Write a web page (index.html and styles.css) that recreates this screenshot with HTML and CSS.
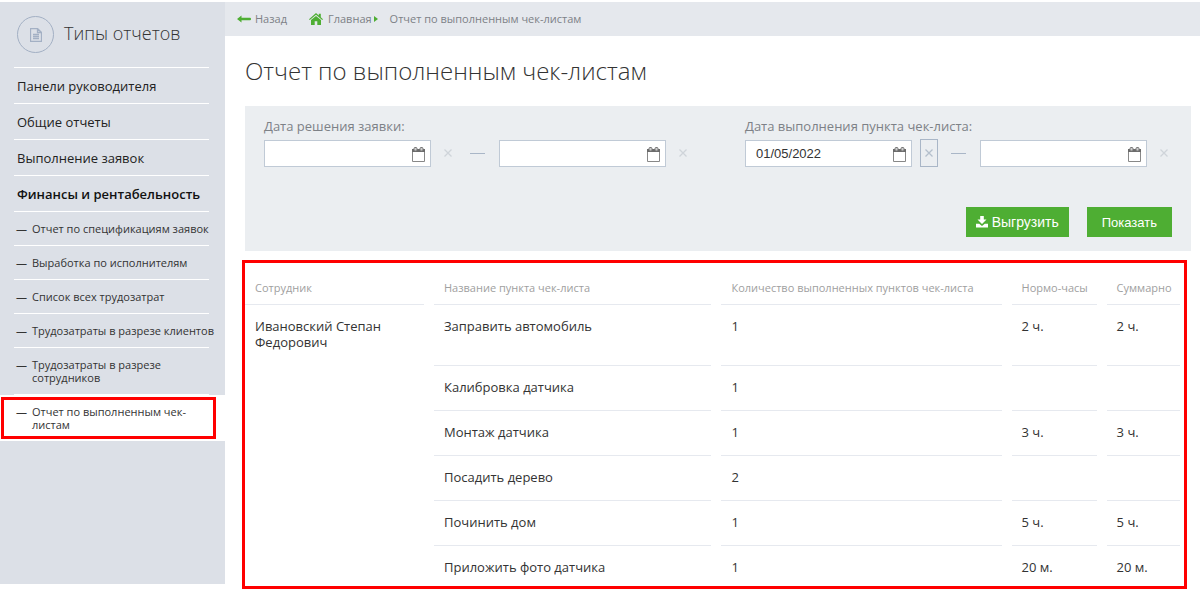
FILE: index.html
```html
<!DOCTYPE html>
<html lang="ru">
<head>
<meta charset="utf-8">
<meta name="viewport" content="width=device-width, initial-scale=1">
<title>Отчет по выполненным чек-листам</title>
<link rel="stylesheet" href="styles.css">
</head>
<body>
<svg class="defs" aria-hidden="true">
  <symbol id="calendar" viewBox="0 0 13 15">
    <path d="M.5 4.500h12v10H.5z" fill="#fff" stroke="#888"/>
    <path d="M0 2h13v3H0z" fill="#6b6b6b"/>
    <rect x="2" y=".5" width="3" height="3.500" rx="1" fill="#ccc" stroke="#777"/>
    <rect x="8" y=".5" width="3" height="3.500" rx="1" fill="#ccc" stroke="#777"/>
  </symbol>
  <symbol id="cross" viewBox="0 0 8 8">
    <path d="M.5.5l7 7M7.500.5l-7 7" fill="none" stroke="currentColor" stroke-width="1.300"/>
  </symbol>
</svg>
<div class="app">
  <aside class="sidebar">
    <div class="sidebar-head">
      <span class="sidebar-badge">
        <svg width="12" height="14" viewBox="0 0 12 14" fill="none" stroke="currentColor" stroke-width="1.300"><path d="M.5.5h7l4 4v9H.5zM7.500.5v4h4M3 6.500h6M3 8.500h6M3 10.500h6"/></svg>
      </span>
      <h2 class="sidebar-title">Типы отчетов</h2>
    </div>
    <nav>
      <ul class="menu">
        <li><a href="#">Панели руководителя</a></li>
        <li><a href="#">Общие отчеты</a></li>
        <li><a href="#">Выполнение заявок</a></li>
        <li class="current"><a href="#">Финансы и рентабельность</a></li>
      </ul>
      <ul class="submenu">
        <li><a href="#">Отчет по спецификациям заявок</a></li>
        <li><a href="#">Выработка по исполнителям</a></li>
        <li><a href="#">Список всех трудозатрат</a></li>
        <li><a href="#">Трудозатраты в разрезе клиентов</a></li>
        <li><a href="#">Трудозатраты в разрезе сотрудников</a></li>
        <li class="active"><a href="#">Отчет по выполненным чек-листам</a></li>
      </ul>
    </nav>
  </aside>
  <main class="main">
    <nav class="crumbs">
      <a class="back" href="#"><svg width="14" height="8" viewBox="0 0 14 8" fill="#4eae33"><path d="M0 4L4.500.5v2.200H13q1 0 1 1.300t-1 1.300H4.500v2.200z"/></svg>Назад</a>
      <a class="home" href="#"><svg width="14" height="12" viewBox="0 0 14 12" fill="#4eae33"><path d="M7 0l2.800 2.500V.8h2v3.500L14 6.200l-.8.900L7 1.800.8 7.100 0 6.200z"/><path d="M7 2.900l5 4.200V12H8.300V8.300H5.700V12H2V7.100z"/></svg>Главная<svg class="caret" width="4" height="6" viewBox="0 0 4 6" fill="#4eae33"><path d="M0 0l4 3-4 3z"/></svg></a>
      <span>Отчет по выполненным чек-листам</span>
    </nav>
    <div class="content">
      <h1 class="title">Отчет по выполненным чек-листам</h1>
      <form class="filter">
        <div class="ranges">
          <fieldset class="range">
            <legend>Дата решения заявки:</legend>
            <div class="range-row">
              <span class="date"><input type="text" aria-label="Дата решения, с"><svg><use href="#calendar"/></svg></span>
              <button class="clear" type="button" aria-label="Очистить"><svg><use href="#cross"/></svg></button>
              <span class="dash"></span>
              <span class="date"><input type="text" aria-label="Дата решения, по"><svg><use href="#calendar"/></svg></span>
              <button class="clear" type="button" aria-label="Очистить"><svg><use href="#cross"/></svg></button>
            </div>
          </fieldset>
          <fieldset class="range">
            <legend>Дата выполнения пункта чек-листа:</legend>
            <div class="range-row">
              <span class="date"><input type="text" value="01/05/2022" aria-label="Дата выполнения, с"><svg><use href="#calendar"/></svg></span>
              <button class="clear focused" type="button" aria-label="Очистить"><svg><use href="#cross"/></svg></button>
              <span class="dash"></span>
              <span class="date"><input type="text" aria-label="Дата выполнения, по"><svg><use href="#calendar"/></svg></span>
              <button class="clear" type="button" aria-label="Очистить"><svg><use href="#cross"/></svg></button>
            </div>
          </fieldset>
        </div>
        <div class="actions">
          <button class="btn export" type="button"><svg width="12" height="12" viewBox="0 0 12 12" fill="#fff"><path d="M4.200 0h3.600v3.500h2.700L6 8 1.500 3.500h2.700z"/><path d="M0 7.800h3.200L6 10l2.800-2.200H12v3.700H0z"/></svg>Выгрузить</button>
          <button class="btn show" type="submit">Показать</button>
        </div>
      </form>
      <div class="result">
        <table class="report">
          <colgroup><col class="c-who"><col class="c-item"><col class="c-count"><col class="c-norm"><col class="c-sum"></colgroup>
          <thead>
            <tr><th>Сотрудник</th><th>Название пункта чек-листа</th><th>Количество выполненных пунктов чек-листа</th><th>Нормо-часы</th><th>Суммарно</th></tr>
          </thead>
          <tbody>
            <tr class="first"><td rowspan="6">Ивановский Степан Федорович</td><td>Заправить автомобиль</td><td>1</td><td>2 ч.</td><td>2 ч.</td></tr>
            <tr><td>Калибровка датчика</td><td>1</td><td></td><td></td></tr>
            <tr><td>Монтаж датчика</td><td>1</td><td>3 ч.</td><td>3 ч.</td></tr>
            <tr><td>Посадить дерево</td><td>2</td><td></td><td></td></tr>
            <tr><td>Починить дом</td><td>1</td><td>5 ч.</td><td>5 ч.</td></tr>
            <tr class="last"><td>Приложить фото датчика</td><td>1</td><td>20 м.</td><td>20 м.</td></tr>
          </tbody>
        </table>
      </div>
    </div>
  </main>
</div>
</body>
</html>
```
FILE: styles.css
```css
* { box-sizing: border-box; }
body {
  margin: 0;
  background: #fff;
  color: #333;
  font: 13px/16px "Open Sans", sans-serif;
}
a { color: inherit; text-decoration: none; }
ul { list-style: none; margin: 0; padding: 0; }
.defs { display: none; }
.app { display: flex; min-height: 100vh; padding-top: 2px; }

.sidebar { flex: 0 0 225px; margin-bottom: 15px; background: #dce0e7; }
.sidebar-head { display: flex; align-items: center; gap: 10px; height: 65px; padding-left: 17px; }
.sidebar-badge {
  display: flex;
  align-items: center;
  justify-content: center;
  width: 37px;
  height: 37px;
  border: 1px solid #a3b0c4;
  border-radius: 50%;
  color: #a3b0c4;
}
.sidebar-title { margin: 0; padding-bottom: 4px; font-size: 18px; line-height: 24px; font-weight: 300; }
.menu { margin: 0 16px 0 14px; border-top: 1px solid #fff; }
.menu a { display: block; padding: 10px 3px 9px; border-bottom: 1px solid #fff; color: #222; white-space: nowrap; }
.menu .current a { color: #111; font-weight: 600; }
.submenu { font-size: 11px; line-height: 13px; }
.submenu li { position: relative; }
.submenu a { display: block; margin: 0 10px 0 14px; padding: 10px 0 10px 18px; }
.submenu a::before { content: "—"; float: left; margin-left: -16px; }
.submenu li::after {
  content: "";
  display: block;
  height: 1px;
  margin: 0 16px 0 14px;
  background: #fff;
}
.submenu .active { background: #fff; }
.submenu .active::after {
  position: absolute;
  inset: 2px 9px 2px 1px;
  height: auto;
  margin: 0;
  border: 3px solid #f00;
  background: none;
}

.main { flex: 1; min-width: 0; }
.crumbs {
  display: flex;
  align-items: center;
  height: 34px;
  padding-left: 12px;
  background: #e5e8ed;
  color: #7d8187;
  font-size: 11px;
}
.crumbs a { display: flex; align-items: center; }
.back { gap: 4px; margin-right: 22px; }
.home { gap: 5px; margin-right: 12px; }
.home .caret { margin-left: -3px; }
.content { padding: 21px 9px 10px 20px; }
.title { margin: 0 0 21px; font-size: 24px; line-height: 28px; font-weight: 300; }

.filter { padding: 12px 18px 14px 19px; background: #ebeef1; }
.ranges { display: flex; flex-wrap: wrap; gap: 20px 53px; }
.range { margin: 0; padding: 0; border: 0; min-width: 0; }
.range legend { padding: 0; margin-bottom: 5px; color: #7d8187; }
.range-row { display: flex; align-items: center; }
.date { position: relative; width: 167px; }
.date input {
  display: block;
  width: 100%;
  height: 27px;
  padding: 0 30px 0 10px;
  border: 1px solid #c0cad6;
  background: #fff;
  color: #333;
  font: 13px "Liberation Sans", sans-serif;
}
.date svg { position: absolute; top: 7px; right: 6px; width: 13px; height: 15px; }
.clear {
  display: flex;
  align-items: center;
  justify-content: center;
  width: 18px;
  height: 28px;
  margin-left: 8px;
  padding: 0;
  border: 1px solid transparent;
  background: none;
  color: #cfd4da;
}
.clear svg { width: 8px; height: 8px; }
.clear.focused { border-color: #a9b6c7; color: #b4bfcc; }
.dash { width: 15px; height: 1px; margin: 0 14px 0 13px; background: #a9b6c7; }
.actions { display: flex; justify-content: flex-end; gap: 18px; margin: 40px 1px 0 0; }
.btn {
  display: flex;
  align-items: center;
  gap: 4px;
  height: 30px;
  border: 0;
  background: #4eae33;
  color: #fff;
  font: 14px "Liberation Sans", sans-serif;
}
.export { padding: 0 10px; }
.show { padding: 0 15px; font-size: 13px; }

.result { margin: 9px 4px 0 -3px; border: 3px solid #f00; }
.report {
  width: calc(100% + 16px);
  margin: 0 -6px 0 -10px;
  table-layout: fixed;
  border-collapse: separate;
  border-spacing: 10px 0;
}
.c-who { width: 20%; }
.c-item { width: 31%; }
.c-count { width: 31.3%; }
.c-norm { width: 9.5%; }
.c-sum { width: 8.2%; }
.report th, .report td { padding: 13px 10px 15px; border-bottom: 1px solid #e6e9ef; text-align: left; vertical-align: top; }
.report th { padding: 17px 10px 8px; color: #a0a0a0; font-size: 11px; font-weight: 400; white-space: nowrap; }
.report .first td { padding: 13px 10px 31px; }
.report .last td { padding-bottom: 11px; }
.report .last td, .report td[rowspan] { border-bottom: 0; }
```
